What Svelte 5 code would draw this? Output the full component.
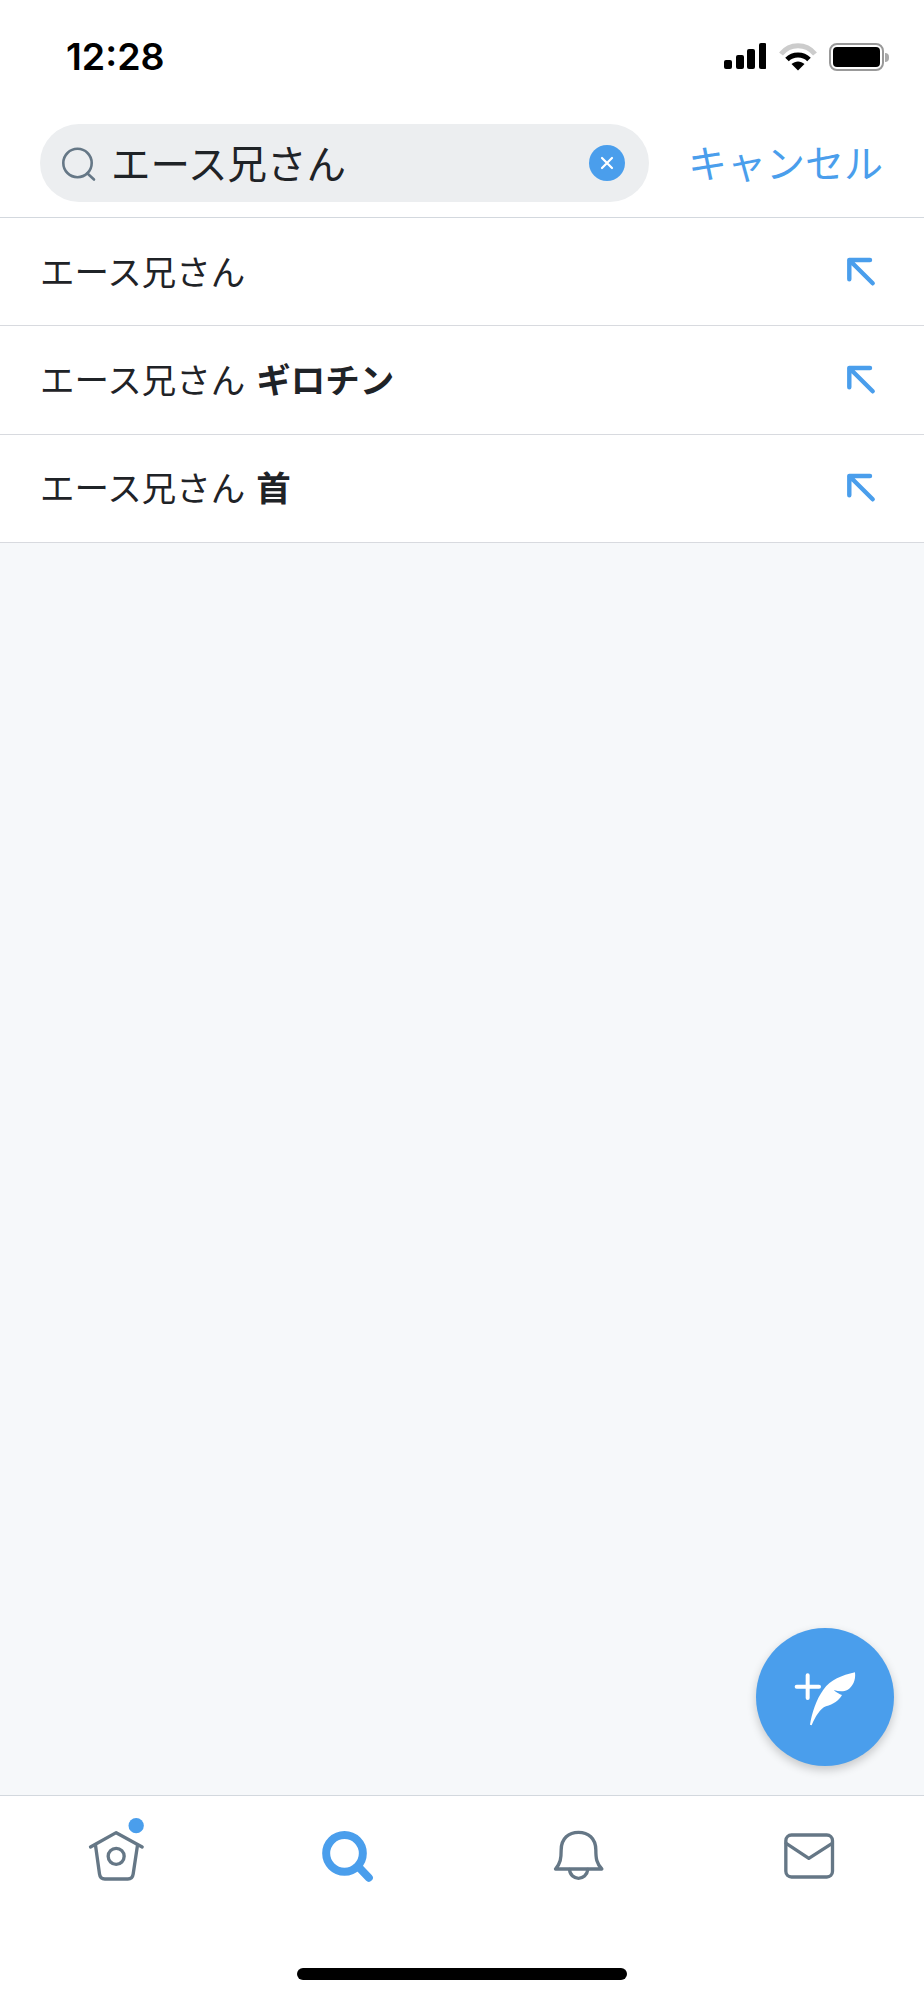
<script>
    const rows = [
        { text: "エース兄さん", bold: "" },
        { text: "エース兄さん", bold: "ギロチン" },
        { text: "エース兄さん", bold: "首" },
    ];
</script>

<div class="page">
    <div class="status">
        <span class="time">12:28</span>
        <div class="status-icons">
            <svg class="signal" width="42" height="26" viewBox="0 0 42 26">
                <rect x="0" y="17" width="8" height="9" rx="2" />
                <rect x="12" y="12" width="8" height="14" rx="2" />
                <rect x="23" y="6" width="8" height="20" rx="2" />
                <rect x="35" y="0" width="7.5" height="26" rx="2" />
            </svg>
            <svg class="wifi" width="38" height="28" viewBox="0 0 38 28">
                <path d="M2 11 C11 0 27 0 36 11" fill="none" stroke="#cccccc" stroke-width="5" />
                <path d="M8 16.5 C14 10.5 24 10.5 30 16.5" fill="none" stroke="#000" stroke-width="5" />
                <path d="M12.5 21 C16.5 17.5 21.5 17.5 25.5 21 L19 27.5 Z" fill="#000" />
            </svg>
            <div class="battery">
                <div class="battery-body"><div class="battery-fill"></div></div>
                <div class="battery-nub"></div>
            </div>
        </div>
    </div>

    <div class="search-row">
        <div class="search-box">
            <svg class="search-icon" width="36" height="38" viewBox="0 0 36 38">
                <circle cx="17.5" cy="19" r="14.2" fill="none" stroke="#657786" stroke-width="2.6" />
                <path d="M27.5 29.5 L34 35.5" stroke="#657786" stroke-width="2.6" stroke-linecap="round" />
            </svg>
            <span class="query">エース兄さん</span>
            <svg class="clear" width="36" height="36" viewBox="0 0 36 36">
                <circle cx="18" cy="18" r="18" fill="#4a9eec" />
                <path d="M13 13 L23 23 M23 13 L13 23" stroke="#fff" stroke-width="2.2" stroke-linecap="round" />
            </svg>
        </div>
        <span class="cancel">キャンセル</span>
    </div>

    <ul class="list">
        {#each rows as row}
            <li class="row">
                <span class="row-text">{row.text}{#if row.bold}<b>{row.bold}</b>{/if}</span>
                <svg width="32" height="32" viewBox="0 0 32 32">
                    <path d="M25 4 H4.3 V23.3 M4.3 4 L27.7 27.3" fill="none" stroke="#4a9eec" stroke-width="4.4" stroke-linecap="round" stroke-linejoin="round" />
                </svg>
            </li>
        {/each}
    </ul>

    <main class="content">
        <button class="fab" type="button" aria-label="compose">
            <svg width="138" height="138" viewBox="48 55 414 414">
                <path d="M170 231 H237 M203 197 V265" stroke="#fff" stroke-width="12" stroke-linecap="round" />
                <path d="M345 188 C348 212 338 232 322 241 C312 246 297 246 281 241 C289 249 298 253 306 256 C297 272 280 284 258 290 C240 296 226 322 215 347 L210 345 C216 310 228 270 250 240 C272 210 305 197 345 188 Z" fill="#fff" />
            </svg>
        </button>
    </main>

    <nav class="tabbar">
        <div class="tabs">
            <div class="tab">
                <svg width="80" height="70" viewBox="226.5 105 240 210" class="ico">
                    <path d="M270 201 L347 158 L425 201" />
                    <path d="M285 196 L297 282 Q299 297 313 297 H382 Q396 297 398 282 L411 196" />
                    <circle cx="347" cy="229" r="24" />
                    <circle cx="407" cy="137" r="23" class="dot" />
                </svg>
            </div>
            <div class="tab">
                <svg width="80" height="70" viewBox="922.5 105 240 210">
                    <circle cx="1035" cy="220" r="55" fill="none" stroke="#4a9eec" stroke-width="24" />
                    <path d="M1078 262 L1108 293" stroke="#4a9eec" stroke-width="24" stroke-linecap="round" />
                </svg>
            </div>
            <div class="tab">
                <svg width="80" height="70" viewBox="235.5 105 240 210" class="ico">
                    <path d="M288 267 C303 250 305 235 305 210 C305 175 328 157 357 157 C386 157 409 175 409 210 C409 235 411 250 427 267 Z" />
                    <path d="M330 268 C333 304 381 304 385 268" />
                </svg>
            </div>
            <div class="tab">
                <svg width="80" height="70" viewBox="928.5 105 240 210" class="ico">
                    <rect x="979" y="165" width="140" height="126" rx="17" />
                    <path d="M980 190 L1048 235 L1118 190" />
                </svg>
            </div>
        </div>
        <div class="home-bar"></div>
    </nav>
</div>

<style>
    :global(body) {
        margin: 0;
        background: #fff;
    }
    .page {
        display: flex;
        flex-direction: column;
        min-height: 2000px;
        font-family: "Noto Sans CJK JP", "Liberation Sans", sans-serif;
        color: #1f2327;
    }
    .status {
        display: flex;
        justify-content: space-between;
        align-items: center;
        height: 28px;
        padding: 43px 35px 0 66px;
    }
    .time {
        font-family: Inter, "Liberation Sans", sans-serif;
        font-size: 37.5px;
        font-weight: 600;
        line-height: 28px;
        color: #000;
    }
    .status-icons {
        display: flex;
        align-items: flex-start;
    }
    .wifi {
        margin-left: 13px;
    }
    .battery {
        display: flex;
        align-items: center;
        margin-left: 12px;
    }
    .battery-body {
        box-sizing: border-box;
        width: 55px;
        height: 28px;
        padding: 2px;
        border: 2px solid #999;
        border-radius: 8px;
    }
    .battery-fill {
        height: 100%;
        background: #000;
        border-radius: 4px;
    }
    .battery-nub {
        width: 4px;
        height: 9px;
        margin-left: 1px;
        background: #aaa;
        border-radius: 0 4px 4px 0;
    }
    .search-row {
        display: flex;
        align-items: center;
        padding: 53px 33px 15px 40px;
        border-bottom: 1px solid #d3d8de;
    }
    .search-box {
        display: flex;
        align-items: center;
        box-sizing: border-box;
        width: 609px;
        height: 78px;
        padding: 0 24px 0 20px;
        background: #eceef0;
        border-radius: 39px;
    }
    .query {
        flex: 1;
        margin-left: 15px;
        font-size: 39.5px;
        line-height: 76px;
        padding-bottom: 2px;
    }
    .cancel {
        margin-left: 39px;
        padding-bottom: 4px;
        font-size: 39px;
        line-height: 74px;
        color: #4a9eec;
        white-space: nowrap;
    }
    .list {
        margin: 0;
        padding: 0;
        list-style: none;
    }
    .row {
        display: flex;
        align-items: center;
        justify-content: space-between;
        box-sizing: border-box;
        height: 108.4px;
        padding: 0 47px 0 40px;
        border-bottom: 1px solid #d8dadf;
    }
    .row-text {
        padding-bottom: 4px;
        font-size: 34.5px;
        line-height: 46px;
    }
    .row-text b {
        margin-left: 11px;
        font-weight: 700;
    }
    .content {
        position: relative;
        flex: 1;
        background: #f6f8fa;
    }
    .fab {
        position: absolute;
        right: 30px;
        bottom: 29px;
        width: 138px;
        height: 138px;
        padding: 0;
        border: none;
        border-radius: 50%;
        background: #4a9eec;
        box-shadow: 0 4px 10px rgba(0, 0, 0, 0.2);
    }
    .fab svg {
        display: block;
    }
    .tabbar {
        display: flex;
        flex-direction: column;
        align-items: center;
        box-sizing: border-box;
        height: 205px;
        padding-top: 19px;
        background: #fff;
        border-top: 1px solid #d3d8de;
    }
    .tabs {
        display: grid;
        grid-template-columns: repeat(4, 1fr);
        width: 100%;
    }
    .tab {
        display: flex;
        justify-content: center;
    }
    .ico path,
    .ico rect,
    .ico circle {
        fill: none;
        stroke: #657786;
        stroke-width: 10;
        stroke-linecap: round;
        stroke-linejoin: round;
    }
    .ico circle.dot {
        fill: #4a9eec;
        stroke: none;
    }
    .home-bar {
        width: 330px;
        height: 12px;
        margin-top: 83px;
        background: #000;
        border-radius: 6px;
    }
</style>
